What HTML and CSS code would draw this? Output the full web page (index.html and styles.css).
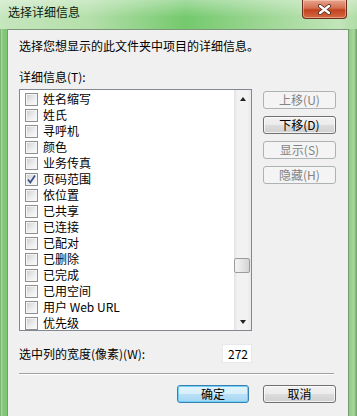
FILE: index.html
```html
<!DOCTYPE html>
<html lang="zh-CN">
<head>
    <meta charset="UTF-8">
    <title>选择详细信息</title>
    <link rel="stylesheet" href="styles.css">
</head>
<body>
    <div class="window">
        <div class="titlebar">
            <span class="title">选择详细信息</span>
            <button class="close">
                <svg width="15" height="11" viewBox="0 0 15 11">
                    <path d="M3 2 L12 9 M12 2 L3 9" stroke="#4a2a22" stroke-width="4" stroke-linecap="round"/>
                    <path d="M3 2 L12 9 M12 2 L3 9" stroke="#ffffff" stroke-width="2.4" stroke-linecap="round"/>
                </svg>
            </button>
        </div>
        <div class="client">
            <p class="intro">选择您想显示的此文件夹中项目的详细信息。</p>
            <p class="label">详细信息(T):</p>
            <div class="main">
                <div class="listbox">
                    <ul class="items">
                        <li><span class="check"></span>姓名缩写</li>
                        <li><span class="check"></span>姓氏</li>
                        <li><span class="check"></span>寻呼机</li>
                        <li><span class="check"></span>颜色</li>
                        <li><span class="check"></span>业务传真</li>
                        <li><span class="check checked"><svg width="11" height="11" viewBox="0 0 11 11"><path d="M2 5.5 L4.3 8.5 L9 1.5" fill="none" stroke="#3d4f86" stroke-width="1.7"/></svg></span>页码范围</li>
                        <li><span class="check"></span>依位置</li>
                        <li><span class="check"></span>已共享</li>
                        <li><span class="check"></span>已连接</li>
                        <li><span class="check"></span>已配对</li>
                        <li><span class="check"></span>已删除</li>
                        <li><span class="check"></span>已完成</li>
                        <li><span class="check"></span>已用空间</li>
                        <li><span class="check"></span>用户 Web URL</li>
                        <li><span class="check"></span>优先级</li>
                    </ul>
                    <div class="scrollbar">
                        <div class="arrow"><span class="tri up"></span></div>
                        <div class="track"><div class="thumb"></div></div>
                        <div class="arrow"><span class="tri down"></span></div>
                    </div>
                </div>
                <div class="side-buttons">
                    <button class="btn" disabled>上移(U)</button>
                    <button class="btn">下移(D)</button>
                    <button class="btn" disabled>显示(S)</button>
                    <button class="btn" disabled>隐藏(H)</button>
                </div>
            </div>
            <div class="width-row">
                <span>选中列的宽度(像素)(W):</span>
                <input class="width-input" type="text" value="272">
            </div>
            <div class="separator"></div>
            <div class="footer">
                <button class="btn default">确定</button>
                <button class="btn">取消</button>
            </div>
        </div>
    </div>
</body>
</html>
```

FILE: styles.css
```css
body {
    margin: 0;
    font-family: "Noto Sans CJK SC", "Liberation Sans", sans-serif;
    font-size: 12px;
    color: #000;
}
.window {
    width: 357px;
    height: 416px;
    overflow: hidden;
    display: flex;
    flex-direction: column;
    background: linear-gradient(to right, #5d8d58 0, #a9dca0 1px, #84c97a 3px, #7fc475 7px, #8ccd82 349px, #a6d99d 354px, #6c9a66 357px);
}
.titlebar {
    height: 29px;
    display: flex;
    justify-content: space-between;
    align-items: flex-start;
    background:
        linear-gradient(to bottom, rgba(255, 255, 255, 0.35), rgba(255, 255, 255, 0) 60%),
        linear-gradient(to right, #c6e6be 0%, #b4dfaa 25%, #74c96d 52%, #9fd796 75%, #c2e5b9 95%, #b0dca6 100%);
}
.title {
    padding: 5px 0 0 8px;
    line-height: 14px;
    color: #0c1a0c;
}
.close {
    width: 45px;
    height: 19px;
    margin-right: 10px;
    padding: 0;
    border: 1px solid #6b2d1f;
    border-top: none;
    border-radius: 0 0 4px 4px;
    background: linear-gradient(to bottom, #e7a58f 0%, #d4704f 45%, #c2421f 55%, #d56a43 100%);
    box-shadow: inset 0 0 0 1px rgba(255, 220, 200, 0.45);
    display: flex;
    align-items: center;
    justify-content: center;
}
.client {
    flex: 1;
    margin: 0 8px 0 7px;
    border: 1px solid #7c967a;
    border-bottom: none;
    background: #f0f0f0;
    padding: 0 12px 0 11px;
}
.intro {
    margin: 9px 0 0;
    line-height: 14px;
}
.label {
    margin: 17px 0 0;
    line-height: 14px;
}
.main {
    display: flex;
    gap: 11px;
    margin-top: 5px;
}
.listbox {
    width: 231px;
    height: 240px;
    border: 1px solid #828790;
    background: #fff;
    display: flex;
}
.items {
    list-style: none;
    margin: 0;
    padding: 1px 0 0;
    flex: 1;
}
.items li {
    height: 16px;
    display: flex;
    align-items: center;
    gap: 5px;
    padding-left: 5px;
    line-height: 16px;
    white-space: nowrap;
}
.check {
    width: 11px;
    height: 11px;
    border: 1px solid #8e8f8f;
    box-shadow: inset 0 0 0 1px #f6f6f6;
    background: linear-gradient(to bottom right, #c9cdd2, #eeeff0 60%, #fbfbfb);
    display: flex;
    align-items: center;
    justify-content: center;
    flex-shrink: 0;
}
.scrollbar {
    width: 17px;
    display: flex;
    flex-direction: column;
    background: linear-gradient(to right, #e3e3e3, #f2f2f2 20%, #f2f2f2 80%, #e8e8e8);
}
.arrow {
    height: 17px;
    display: flex;
    align-items: center;
    justify-content: center;
}
.tri {
    width: 0;
    height: 0;
    border-left: 3.5px solid transparent;
    border-right: 3.5px solid transparent;
}
.tri.up {
    border-bottom: 4px solid #222;
}
.tri.down {
    border-top: 4px solid #222;
}
.track {
    flex: 1;
}
.thumb {
    margin: 151px 1px 0 0;
    height: 13px;
    border: 1px solid #9b9b9b;
    border-radius: 2px;
    background: linear-gradient(to right, #f3f3f3, #e6e6e6 50%, #d4d4d4);
}
.side-buttons {
    display: flex;
    flex-direction: column;
    gap: 7px;
    padding-top: 2px;
}
.btn {
    width: 73px;
    height: 18px;
    padding: 0;
    border: 1px solid #707070;
    border-radius: 3px;
    font-family: inherit;
    font-size: 12px;
    line-height: 16px;
    color: #000;
    background: linear-gradient(to bottom, #f2f2f2 0%, #ebebeb 50%, #dddddd 51%, #cfcfcf 100%);
    box-shadow: inset 0 0 0 1px rgba(255, 255, 255, 0.7);
}
.btn:disabled {
    border-color: #adb2b5;
    background: #f4f4f4;
    color: #838383;
    box-shadow: none;
}
.btn.default {
    width: 72px;
    border-color: #3c7fb1;
    background: linear-gradient(to bottom, #e5f4fc 0%, #d6eefb 50%, #b9e1f8 51%, #a5d6f3 100%);
    box-shadow: inset 0 0 0 1px #6fd1f7;
}
.width-row {
    width: 233px;
    margin-top: 13px;
    display: flex;
    justify-content: space-between;
    align-items: center;
    height: 19px;
}
.width-input {
    width: 24px;
    height: 17px;
    padding: 0 3px 0 1px;
    border: 1px solid #e6e8ec;
    background: #fff;
    font-family: inherit;
    font-size: 12px;
    text-align: right;
    box-sizing: content-box;
}
.separator {
    margin-top: 10px;
    height: 1px;
    background: #a0a0a0;
    border-bottom: 1px solid #fff;
    width: 315px;
}
.footer {
    margin-top: 10px;
    display: flex;
    justify-content: flex-end;
    gap: 14px;
}
```
